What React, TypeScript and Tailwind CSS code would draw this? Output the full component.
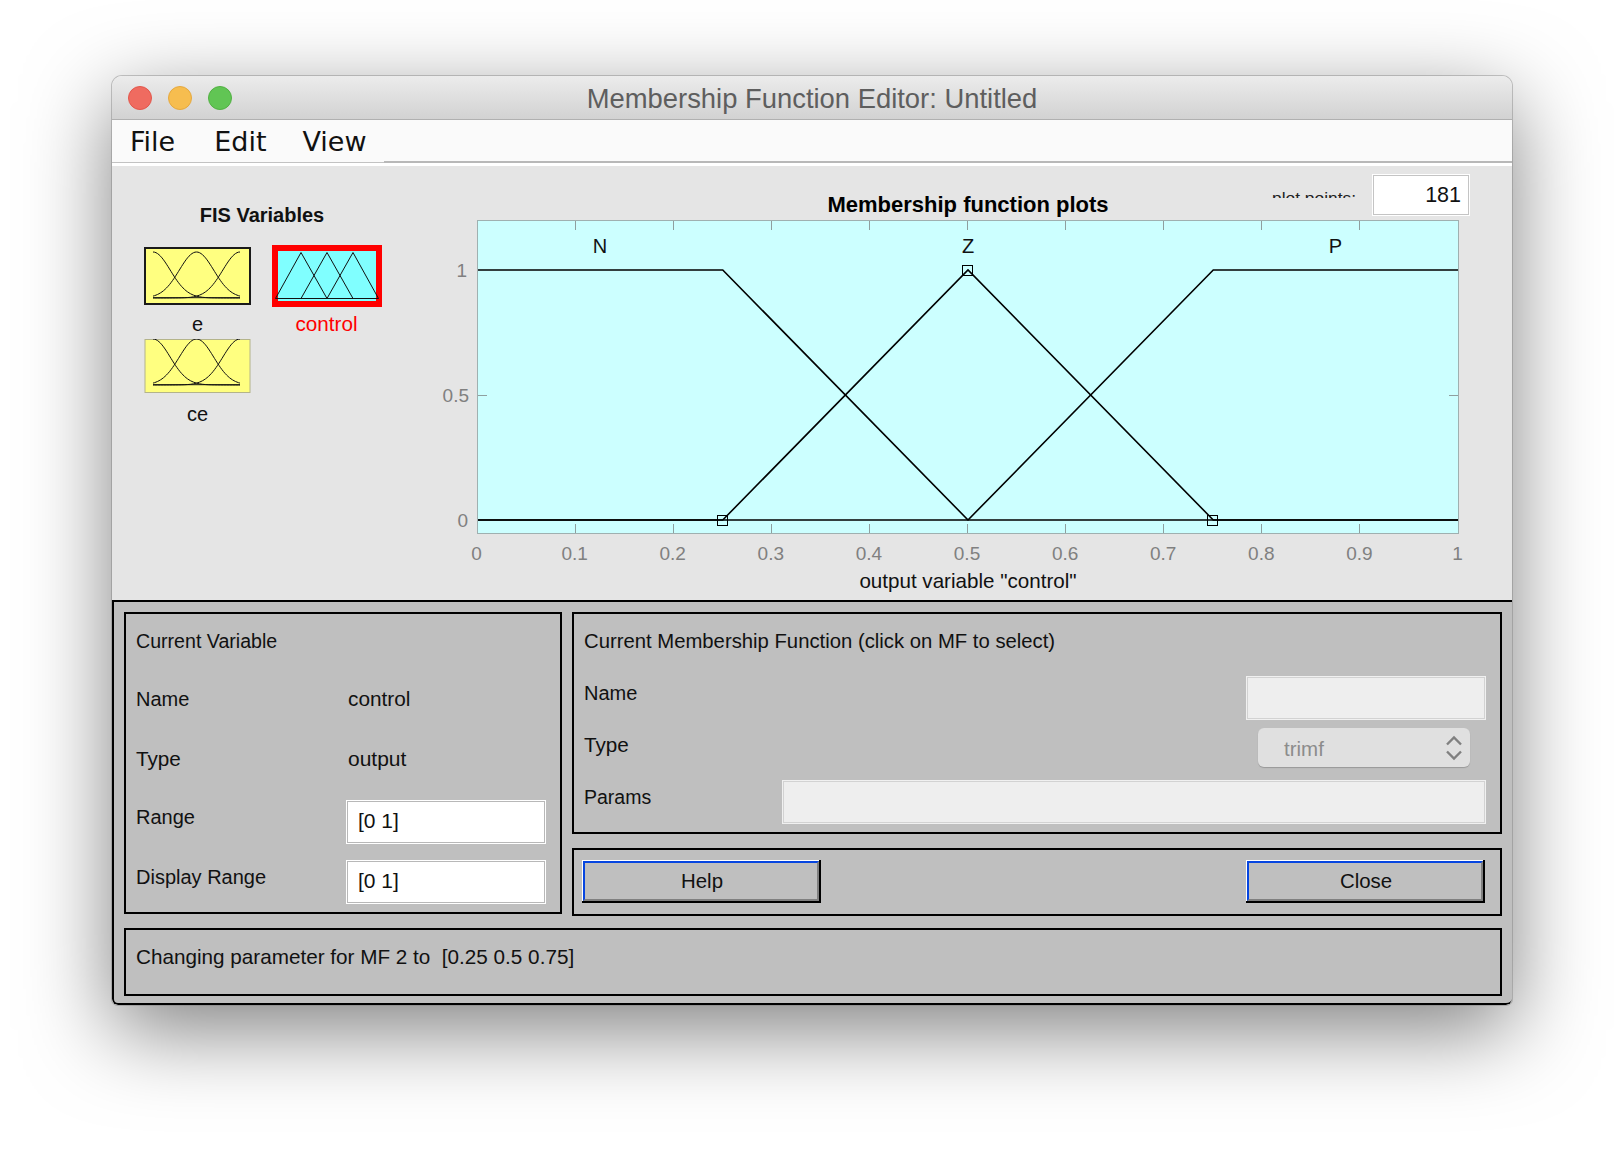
import React from "react";

function gaussPath(cx: number, sigma: number, x0: number, x1: number, base: number, h: number) {
  const pts: string[] = [];
  for (let x = x0; x <= x1 + 0.001; x += 1.5) {
    const y = base - h * Math.exp(-((x - cx) * (x - cx)) / (2 * sigma * sigma));
    pts.push(`${pts.length ? "L" : "M"}${x.toFixed(2)} ${y.toFixed(2)}`);
  }
  return pts.join(" ");
}

function GaussIcon({ selected }: { selected: boolean }) {
  const base = selected ? 51 : 46;
  const h = 46;
  return (
    <svg width="107" height={selected ? 58 : 54} className="block">
      <rect
        x={selected ? 1 : 1}
        y={selected ? 1 : 0.5}
        width="105"
        height={selected ? 56 : 53}
        fill="#ffff80"
        stroke={selected ? "#1a1a1a" : "#b4b48a"}
        strokeWidth={selected ? 2 : 1}
      />
      <g fill="none" stroke="#111" strokeWidth="1">
        <path d={gaussPath(9, 17.2, 9, 96, base, h)} />
        <path d={gaussPath(52.5, 17.2, 9, 96, base, h)} />
        <path d={gaussPath(96, 17.2, 9, 96, base, h)} />
        <path d={`M9 ${base - 0.3}H96`} />
      </g>
    </svg>
  );
}

function TriIcon() {
  return (
    <svg width="111" height="62" className="block">
      <rect x="3" y="3" width="104" height="56" fill="#80ffff" stroke="#ff0000" strokeWidth="6" />
      <g fill="none" stroke="#111" strokeWidth="1">
        <path d="M3.5 53.5L29 7.5L55 53.5" />
        <path d="M29 53.5L55 7.5L81 53.5" />
        <path d="M55 53.5L81 7.5L106.5 53.5" />
        <path d="M3.5 53.5H106.5" />
      </g>
    </svg>
  );
}

function Plot() {
  const X = (v: number) => 47.5 + 981 * v;
  const ticks = [0.1, 0.2, 0.3, 0.4, 0.5, 0.6, 0.7, 0.8, 0.9];
  const xLabels = ["0", "0.1", "0.2", "0.3", "0.4", "0.5", "0.6", "0.7", "0.8", "0.9", "1"];
  return (
    <svg width="1040" height="380" className="block">
      <rect x="47.5" y="0.5" width="981" height="313" fill="#ccffff" stroke="#9fb0b0" strokeWidth="1" />
      <g stroke="#8f9f9f" strokeWidth="1">
        {ticks.map((t) => (
          <g key={t}>
            <path d={`M${Math.round(X(t)) - 0.5} 1V10`} />
            <path d={`M${Math.round(X(t)) - 0.5} 304V313`} />
          </g>
        ))}
        <path d="M48 175.5H57M1019 175.5H1028" />
      </g>
      <g fill="none" stroke="#000" strokeWidth="1.6" strokeLinejoin="miter">
        <path d={`M48 50H${X(0.25)}L${X(0.5)} 300H1028`} />
        <path d={`M48 300H${X(0.25)}L${X(0.5)} 50L${X(0.75)} 300H1028`} />
        <path d={`M48 300H${X(0.5)}L${X(0.75)} 50H1028`} />
      </g>
      <g fill="none" stroke="#000" strokeWidth="1">
        <rect x={Math.round(X(0.25)) - 5.5} y="295.5" width="10" height="10" />
        <rect x={Math.round(X(0.5)) - 5.5} y="45.5" width="10" height="10" />
        <rect x={Math.round(X(0.75)) - 5.5} y="295.5" width="10" height="10" />
      </g>
      <g fill="#111" fontSize="20" textAnchor="middle">
        <text x="170" y="33">N</text>
        <text x="538" y="33">Z</text>
        <text x="905.5" y="33">P</text>
      </g>
      <g fill="#808080" fontSize="19">
        <text x="37" y="57" textAnchor="end">1</text>
        <text x="39" y="182" textAnchor="end">0.5</text>
        <text x="38" y="307" textAnchor="end">0</text>
        {xLabels.map((l, i) => (
          <text key={l} x={46.5 + 98.1 * i} y="340" textAnchor="middle">{l}</text>
        ))}
      </g>
      <text x="538" y="368" fill="#111" fontSize="20.6" textAnchor="middle">output variable "control"</text>
    </svg>
  );
}

function Button({ label }: { label: string }) {
  return (
    <div className="h-[43px] w-[239px] border-r-2 border-b-2 border-black bg-white pt-px pl-px">
      <div className="flex h-full items-center justify-center border-2 border-t-[#0645e0] border-l-[#0645e0] border-r-[#808080] border-b-[#808080] bg-[#bfbfbf] pl-[2px] text-[20.4px] text-[#111]">
        {label}
      </div>
    </div>
  );
}

function Input({ value }: { value: string }) {
  return (
    <div className="flex h-[44px] w-[200px] items-center border border-white bg-white pb-[3px] pl-[11px] text-[21px] text-[#111] shadow-[inset_0_0_0_1px_#b8b8b8]">
      {value}
    </div>
  );
}

export default function App() {
  return (
    <div className="h-[1154px] w-[1624px] overflow-hidden bg-white pl-[112px] pt-[76px] font-['Liberation_Sans',sans-serif] text-[20px] leading-6 text-[#111]">
      <div className="h-[929px] w-[1400px] overflow-hidden rounded-t-[10px] rounded-b-[6px] shadow-[0_0_0_1px_rgba(120,120,120,0.4),0_25px_85px_rgba(0,0,0,0.5)]">
        {/* Title bar */}
        <div className="relative flex h-[44px] items-center justify-center border-b border-[#b0b0b0] bg-gradient-to-b from-[#ececec] to-[#d2d2d2]">
          <div className="absolute left-[16px] top-[10px] flex gap-[16px]">
            <span className="h-[24px] w-[24px] rounded-full border border-[#e2574c] bg-[#ef6b60]" />
            <span className="h-[24px] w-[24px] rounded-full border border-[#e5a83f] bg-[#f6bd4f]" />
            <span className="h-[24px] w-[24px] rounded-full border border-[#52b043] bg-[#61c554]" />
          </div>
          <span className="pt-[2px] text-[27.4px] text-[#5e5e5e]">Membership Function Editor: Untitled</span>
        </div>

        {/* Menu bar */}
        <div className="flex h-[46px] bg-white">
          <div className="flex h-[43px] w-[272px] items-center border-b border-[#c2c2c2] bg-[#fafafa] pl-[18px] font-['DejaVu_Sans',sans-serif] text-[27px] leading-none text-[#111]">
            <span>File</span>
            <span className="ml-[39px]">Edit</span>
            <span className="ml-[36px]">View</span>
          </div>
          <div className="h-[43px] flex-1 border-b-2 border-[#b8b8b8] bg-[#fafafa]" />
        </div>

        {/* Upper section */}
        <div className="flex h-[434px] bg-[#e5e5e5]">
          <div className="w-[318px]">
            <div className="w-[300px] pt-[37px] text-center font-bold">FIS Variables</div>
            <div className="mt-[18px] flex pl-[32px]">
              <div className="flex w-[107px] flex-col items-center pt-[2px]">
                <GaussIcon selected />
                <div className="mt-[7px] h-[27px]">e</div>
                <GaussIcon selected={false} />
                <div className="mt-[9px]">ce</div>
              </div>
              <div className="ml-[21px] flex w-[111px] flex-col items-center">
                <TriIcon />
                <div className="mt-[5px] pr-[2px] text-[20.7px] text-[#ff0000]">control</div>
              </div>
            </div>
          </div>
          <div className="w-[1040px]">
            <div className="flex h-[54px]">
              <div className="ml-[234px] w-[608px] pt-[25px] text-center text-[22px] font-bold leading-7 text-black">
                Membership function plots
              </div>
              <div className="mt-[25px] h-[7px] w-[100px] overflow-hidden text-[17.4px] text-[#222]">
                <div className="-mt-[5px]">plot points:</div>
              </div>
              <div className="mt-[8px] flex h-[42px] w-[98px] items-center justify-end border border-white bg-white pr-[8px] text-[21.5px] shadow-[inset_0_0_0_1px_#c4c4c4]">
                181
              </div>
            </div>
            <Plot />
          </div>
        </div>

        {/* Lower section */}
        <div className="h-[405px] rounded-b-[6px] border-b-2 border-l-2 border-t-2 border-black bg-[#bfbfbf] pl-[10px] pt-[10px]">
          <div className="flex items-start gap-[10px]">
            <div className="h-[302px] w-[438px] shrink-0 border-2 border-black pl-[10px]">
              <div className="flex h-[54px] items-center text-[19.6px]">Current Variable</div>
              <div className="flex h-[62px] items-center">
                <span className="w-[212px]">Name</span>
                <span className="text-[20.8px]">control</span>
              </div>
              <div className="flex h-[58px] items-center">
                <span className="w-[212px] text-[20.7px]">Type</span>
                <span className="text-[21px]">output</span>
              </div>
              <div className="flex h-[60px] items-start">
                <span className="mt-[17px] w-[210px]">Range</span>
                <div className="mt-[12px]"><Input value="[0 1]" /></div>
              </div>
              <div className="flex h-[60px] items-start">
                <span className="mt-[17px] w-[210px]">Display Range</span>
                <div className="mt-[12px]"><Input value="[0 1]" /></div>
              </div>
            </div>

            <div className="flex w-[930px] shrink-0 flex-col gap-[14px]">
              <div className="h-[222px] border-2 border-black pl-[10px] pr-[14px]">
                <div className="flex h-[54px] items-center text-[20.3px]">Current Membership Function (click on MF to select)</div>
                <div className="flex h-[56px] items-start justify-between">
                  <span className="mt-[13px]">Name</span>
                  <div className="mt-[8px] h-[44px] w-[240px] border border-[#f0f0f0] bg-[#eeeeee] shadow-[inset_0_0_0_1px_#d2d2d2]" />
                </div>
                <div className="flex h-[52px] items-start justify-between">
                  <span className="mt-[9px] text-[20.7px]">Type</span>
                  <div className="mr-[16px] mt-[4px] flex h-[39px] w-[212px] items-center justify-between rounded-[6px] bg-[#e0e0e0] pl-[26px] pr-[8px] text-[20.5px] text-[#8c8c8c] shadow-[0_1px_1px_rgba(0,0,0,0.2)]">
                    <span className="pt-[3px]">trimf</span>
                    <svg width="16" height="26" viewBox="0 0 16 26" fill="none" stroke="#808080" strokeWidth="2.4">
                      <path d="M1 9.5L8 2.5L15 9.5" />
                      <path d="M1 16.5L8 23.5L15 16.5" />
                    </svg>
                  </div>
                </div>
                <div className="flex h-[56px] items-start justify-between">
                  <span className="mt-[9px] text-[19.5px]">Params</span>
                  <div className="mt-[4px] h-[44px] w-[704px] border border-[#f0f0f0] bg-[#eeeeee] shadow-[inset_0_0_0_1px_#d2d2d2]" />
                </div>
              </div>
              <div className="flex h-[68px] justify-between border-2 border-black pl-[8px] pr-[15px] pt-[10px]">
                <Button label="Help" />
                <Button label="Close" />
              </div>
            </div>
          </div>
          <div className="mt-[12px] flex h-[68px] w-[1378px] items-start whitespace-pre border-2 border-black pl-[10px] pt-[15px] text-[20.7px]">
            {"Changing parameter for MF 2 to  [0.25 0.5 0.75]"}
          </div>
        </div>
      </div>
    </div>
  );
}
